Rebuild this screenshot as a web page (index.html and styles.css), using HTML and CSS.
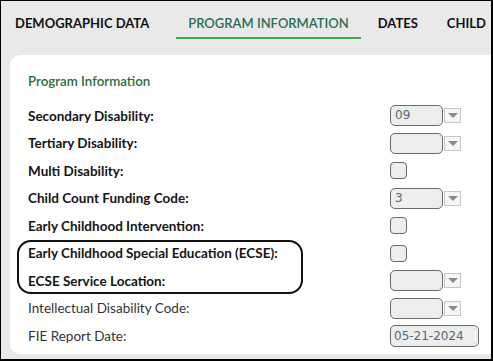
FILE: index.html
```html
<!DOCTYPE html>
<html>
<head>
    <title>Program Information</title>
    <meta name="viewport" content="width=device-width, initial-scale=1">
    <link rel="stylesheet" href="styles.css">
</head>
<body>
    <div class="frame">
        <div class="tabs">
            <div class="tab">DEMOGRAPHIC DATA</div>
            <div class="tab active">PROGRAM INFORMATION</div>
            <div class="tab">DATES</div>
            <div class="tab">CHILD</div>
        </div>

        <div class="panel">
            <h3 class="section-title">Program Information</h3>

            <div class="form-grid">
                <div class="label">Secondary Disability:</div>
                <div class="control"><span class="select">09</span><span class="drop"></span></div>

                <div class="label">Tertiary Disability:</div>
                <div class="control"><span class="select"></span><span class="drop"></span></div>

                <div class="label">Multi Disability:</div>
                <div class="control"><span class="check"></span></div>

                <div class="label">Child Count Funding Code:</div>
                <div class="control"><span class="select">3</span><span class="drop"></span></div>

                <div class="label">Early Childhood Intervention:</div>
                <div class="control"><span class="check"></span></div>

                <div class="label">Early Childhood Special Education (ECSE):</div>
                <div class="control"><span class="check"></span></div>

                <div class="label">ECSE Service Location:</div>
                <div class="control"><span class="select"></span><span class="drop"></span></div>

                <div class="label plain">Intellectual Disability Code:</div>
                <div class="control"><span class="select"></span><span class="drop"></span></div>

                <div class="label plain">FIE Report Date:</div>
                <div class="control"><span class="date">05-21-2024</span></div>
            </div>
        </div>

        <!-- callout drawn around the two ECSE rows -->
        <div class="callout"></div>
    </div>
</body>
</html>
```

FILE: styles.css
```css
html, body { margin: 0; padding: 0; }
body { font-family: Lato, "Open Sans", sans-serif; background-color: #fff; }
.frame { position: relative; width: 493px; height: 361px; box-sizing: border-box; border-style: solid; border-color: #000; border-width: 1px 2px 2px 1px; background-color: #e9e9e9; overflow: hidden; }

.tabs { display: flex; height: 54px; padding-left: 2px; white-space: nowrap; }
.tab { padding: 0 12px; height: 36px; line-height: 44px; font-size: 13px; font-weight: 700; color: #111; border-bottom: 2px solid transparent; margin-right: 5px; }
.tab:first-child { margin-right: 15px; }
.tab.active { color: #2b6d55; font-weight: 600; border-bottom-color: #3eab48; margin-right: 5px; }

.panel { margin-left: 9px; height: 299px; background-color: #fff; border-radius: 10px 0 0 10px; padding: 0 0 0 18px; box-sizing: border-box; }
.section-title { margin: 0; padding-top: 18px; height: 47px; box-sizing: border-box; font-size: 13.3px; font-weight: 600; color: #2c6b3c; line-height: 16px; }

.form-grid { display: grid; grid-template-columns: 362px auto; grid-auto-rows: 27.5px; align-items: center; }
.label { font-size: 13.5px; font-weight: 700; color: #151515; }
.label.plain { font-weight: 400; color: #333; }

.control { display: flex; align-items: center; gap: 1px; }
.select, .date { display: inline-block; box-sizing: border-box; height: 21px; width: 53px; border: 1px solid #6a6a6a; border-radius: 5px; background-color: #eceeee; font-family: "DejaVu Sans", sans-serif; font-size: 12px; line-height: 19px; padding-left: 4px; color: #5b6675; }
.date { width: 89px; height: 22px; line-height: 20px; padding-left: 3px; }
.drop { position: relative; display: inline-block; box-sizing: border-box; width: 17px; height: 15px; border: 1px solid #c6c6c6; background-color: #f6f6f6; }
.drop::after { content: ""; position: absolute; left: 3px; top: 4px; border-left: 5px solid transparent; border-right: 5px solid transparent; border-top: 5px solid #8a8a8a; }
.check { display: inline-block; box-sizing: border-box; width: 17px; height: 17px; border: 1px solid #6a6a6a; border-radius: 4px; background-color: #eceeee; }

.callout { position: absolute; left: 16px; top: 239px; width: 286px; height: 54px; box-sizing: border-box; border: 2px solid #111; border-radius: 14px; }
```
